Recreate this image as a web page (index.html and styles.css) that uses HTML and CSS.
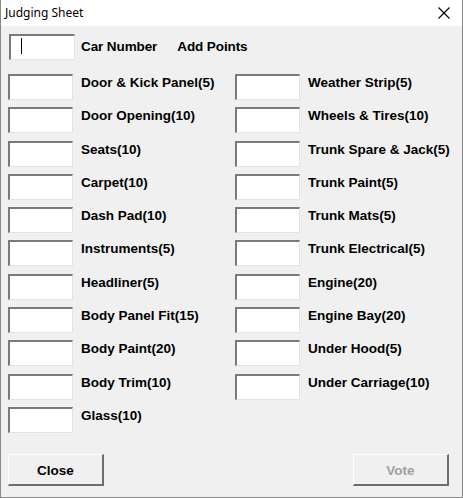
FILE: index.html
```html
<!DOCTYPE html>
<html>
<head>
<meta charset="utf-8">
<link rel="stylesheet" href="styles.css">
</head>
<body>
<div class="window">
  <div class="titlebar">
    <span class="title">Judging Sheet</span>
    <svg class="close-x" width="12" height="12" viewBox="0 0 12 12"><path d="M0.5 0.5 L11.5 11.5 M11.5 0.5 L0.5 11.5" stroke="#000" stroke-width="1.1" fill="none"/></svg>
  </div>
  <div class="content">
    <div class="head-row">
      <div class="field car"><span class="caret"></span></div>
      <span class="label">Car Number</span>
      <span class="label add">Add Points</span>
    </div>
    <div class="grid">
      <div class="col">
        <div class="row"><div class="field"></div><span class="label">Door &amp; Kick Panel(5)</span></div>
        <div class="row"><div class="field"></div><span class="label">Door Opening(10)</span></div>
        <div class="row"><div class="field"></div><span class="label">Seats(10)</span></div>
        <div class="row"><div class="field"></div><span class="label">Carpet(10)</span></div>
        <div class="row"><div class="field"></div><span class="label">Dash Pad(10)</span></div>
        <div class="row"><div class="field"></div><span class="label">Instruments(5)</span></div>
        <div class="row"><div class="field"></div><span class="label">Headliner(5)</span></div>
        <div class="row"><div class="field"></div><span class="label">Body Panel Fit(15)</span></div>
        <div class="row"><div class="field"></div><span class="label">Body Paint(20)</span></div>
        <div class="row"><div class="field"></div><span class="label">Body Trim(10)</span></div>
        <div class="row"><div class="field"></div><span class="label">Glass(10)</span></div>
      </div>
      <div class="col">
        <div class="row"><div class="field"></div><span class="label">Weather Strip(5)</span></div>
        <div class="row"><div class="field"></div><span class="label">Wheels &amp; Tires(10)</span></div>
        <div class="row"><div class="field"></div><span class="label">Trunk Spare &amp; Jack(5)</span></div>
        <div class="row"><div class="field"></div><span class="label">Trunk Paint(5)</span></div>
        <div class="row"><div class="field"></div><span class="label">Trunk Mats(5)</span></div>
        <div class="row"><div class="field"></div><span class="label">Trunk Electrical(5)</span></div>
        <div class="row"><div class="field"></div><span class="label">Engine(20)</span></div>
        <div class="row"><div class="field"></div><span class="label">Engine Bay(20)</span></div>
        <div class="row"><div class="field"></div><span class="label">Under Hood(5)</span></div>
        <div class="row"><div class="field"></div><span class="label">Under Carriage(10)</span></div>
      </div>
    </div>
    <div class="buttons">
      <div class="btn">Close</div>
      <div class="btn disabled">Vote</div>
    </div>
  </div>
</div>
</body>
</html>
```

FILE: styles.css
```css
html, body {
  margin: 0;
  padding: 0;
  background: #ffffff;
}
.window {
  width: 463px;
  height: 498px;
  box-sizing: border-box;
  border: 1px solid #888888;
  border-top: none;
  display: flex;
  flex-direction: column;
  background: #f0f0f0;
}
.titlebar {
  height: 26px;
  background: #ffffff;
  display: flex;
  align-items: center;
  justify-content: space-between;
  padding: 0 12px 0 4px;
  flex: none;
}
.title {
  font-family: "Noto Sans", "Open Sans", sans-serif;
  font-size: 12px;
  color: #000;
  margin-top: -2px;
}
.close-x {
  display: block;
  margin-top: -1px;
}
.content {
  flex: 1;
  padding: 8px 0 0 7px;
  display: flex;
  flex-direction: column;
  font-family: "Liberation Sans", Arial, sans-serif;
  font-weight: bold;
  font-size: 13.5px;
  color: #000;
}
.field {
  width: 65px;
  height: 26px;
  box-sizing: border-box;
  background: #ffffff;
  border-style: solid;
  border-width: 2px 1px 1px 2px;
  border-color: #7a7a7a #e3e3e3 #e3e3e3 #7a7a7a;
  flex: none;
  position: relative;
}
.field.car {
  width: 66px;
  margin-left: 1px;
}
.caret {
  position: absolute;
  left: 10px;
  top: 2px;
  width: 1px;
  height: 16px;
  background: #000;
}
.head-row {
  display: flex;
  align-items: flex-start;
  height: 26px;
}
.label {
  margin-left: 8px;
  padding-top: 1px;
  line-height: 16px;
  white-space: nowrap;
}
.head-row .label {
  margin-left: 6px;
  padding-top: 5px;
  letter-spacing: -0.1px;
}
.head-row .label.add {
  margin-left: 20px;
}
.grid {
  display: grid;
  grid-template-columns: 227px 1fr;
  margin-top: 14px;
}
.col {
  display: flex;
  flex-direction: column;
  gap: 7.3px;
}
.row {
  display: flex;
  align-items: flex-start;
  height: 26px;
}
.buttons {
  margin-top: auto;
  margin-bottom: 11px;
  display: flex;
  justify-content: space-between;
  padding-right: 13px;
}
.btn {
  width: 96px;
  height: 32px;
  box-sizing: border-box;
  border-style: solid;
  border-width: 1px 2px 2px 1px;
  border-color: #ffffff #6d6d6d #6d6d6d #ffffff;
  background: #f0f0f0;
  display: flex;
  align-items: center;
  justify-content: center;
  font-size: 13.5px;
  padding-top: 1px;
}
.btn.disabled {
  color: #a0a0a0;
}
```
